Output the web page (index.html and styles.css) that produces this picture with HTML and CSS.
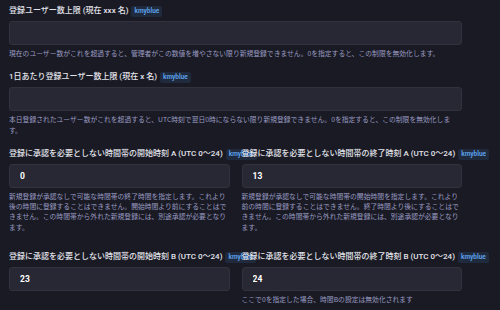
FILE: index.html
```html
<!DOCTYPE html>
<html>
<head>
    <meta charset="utf-8">
    <title>サーバー設定</title>
    <link rel="stylesheet" href="styles.css">
</head>
<body>
    <form class="settings">
        <div class="field">
            <label class="label">登録ユーザー数上限 (現在 xxx 名)<span class="badge">kmyblue</span></label>
            <input class="input" type="text" value="">
            <p class="hint">現在のユーザー数がこれを超過すると、管理者がこの数値を増やさない限り新規登録できません。0を指定すると、この制限を無効化します。</p>
        </div>

        <div class="field">
            <label class="label">1日あたり登録ユーザー数上限 (現在 x 名)<span class="badge">kmyblue</span></label>
            <input class="input" type="text" value="">
            <p class="hint">本日登録されたユーザー数がこれを超過すると、UTC時刻で翌日0時にならない限り新規登録できません。0を指定すると、この制限を無効化します。</p>
        </div>

        <div class="row">
            <div class="field">
                <label class="label">登録に承認を必要としない時間帯の開始時刻 A (UTC 0〜24)<span class="badge">kmyblue</span></label>
                <input class="input" type="text" value="0">
                <p class="hint">新規登録が承認なしで可能な時間帯の終了時間を指定します。これより後の時間に登録することはできません。開始時間より前にすることはできません。この時間帯から外れた新規登録には、別途承認が必要となります。</p>
            </div>
            <div class="field">
                <label class="label">登録に承認を必要としない時間帯の終了時刻 A (UTC 0〜24)<span class="badge">kmyblue</span></label>
                <input class="input" type="text" value="13">
                <p class="hint">新規登録が承認なしで可能な時間帯の開始時間を指定します。これより前の時間に登録することはできません。終了時間より後にすることはできません。この時間帯から外れた新規登録には、別途承認が必要となります。</p>
            </div>
        </div>

        <div class="row">
            <div class="field">
                <label class="label">登録に承認を必要としない時間帯の開始時刻 B (UTC 0〜24)<span class="badge">kmyblue</span></label>
                <input class="input" type="text" value="23">
            </div>
            <div class="field">
                <label class="label">登録に承認を必要としない時間帯の終了時刻 B (UTC 0〜24)<span class="badge">kmyblue</span></label>
                <input class="input" type="text" value="24">
                <p class="hint">ここで0を指定した場合、時間Bの設定は無効化されます</p>
            </div>
        </div>
    </form>
</body>
</html>
```

FILE: styles.css
```css
body {
    margin: 0;
    background-color: #191a23;
    font-family: Roboto, "Noto Sans CJK JP", sans-serif;
    overflow: hidden;
}

.settings {
    width: 453px;
    padding: 5px 0 0 9px;
}

.field {
    margin-bottom: 13px;
}

.row {
    display: grid;
    grid-template-columns: minmax(0, 1fr) minmax(0, 1fr);
    column-gap: 12px;
    margin-top: 3px;
}

.row .field {
    min-width: 0;
    margin-bottom: 16px;
}

.label {
    display: block;
    font-size: 8px;
    line-height: 12px;
    font-weight: 500;
    color: #e4e4ec;
    white-space: nowrap;
    margin-bottom: 4px;
}

.badge {
    display: inline-block;
    margin-left: 3px;
    padding: 0 3px;
    font-size: 6.5px;
    line-height: 11px;
    font-weight: 700;
    color: #5c9fe8;
    background-color: #1f2a3d;
    border-radius: 2px;
    vertical-align: top;
    margin-top: 1px;
}

.input {
    display: block;
    box-sizing: border-box;
    width: 100%;
    height: 24px;
    margin: 0;
    padding: 0 10px;
    background-color: #282834;
    border: 1px solid #32323f;
    border-radius: 3px;
    color: #ffffff;
    font-family: Roboto, "Noto Sans CJK JP", sans-serif;
    font-size: 8.5px;
    font-weight: 700;
    outline: none;
}

.hint {
    margin: 3px 0 0;
    font-family: "Noto Sans CJK JP", sans-serif;
    font-size: 6.8px;
    line-height: 10.3px;
    color: #9a9ac2;
}
```
